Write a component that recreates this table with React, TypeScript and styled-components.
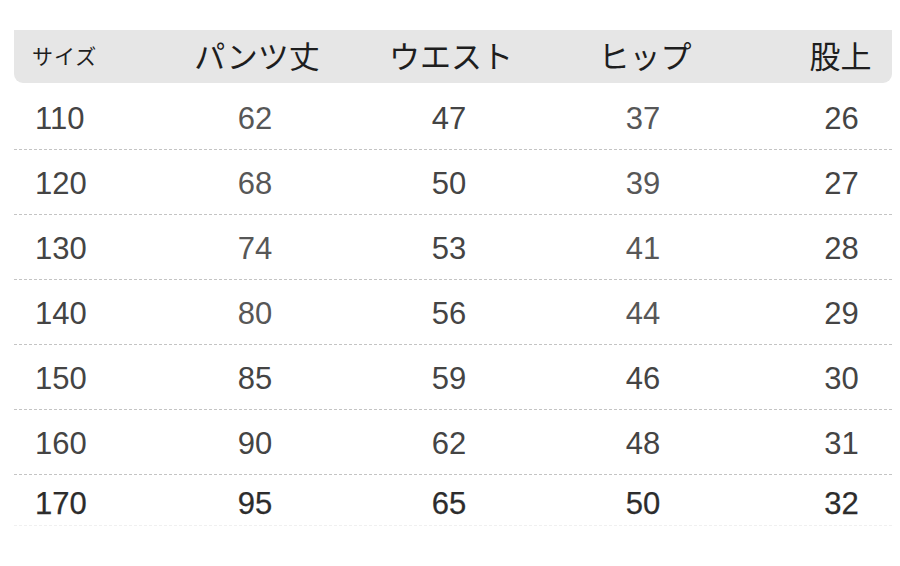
import React from "react";
import styled, { createGlobalStyle } from "styled-components";

const Global = createGlobalStyle`
  html, body { margin: 0; padding: 0; background: #ffffff; }
  body { width: 900px; height: 566px; overflow: hidden; }
`;

const Page = styled.div`
  padding: 30px 8px 0 14px;
  font-family: "Liberation Sans", Arial, "Noto Sans CJK JP", sans-serif;
`;

const Table = styled.div`
  width: 878px;
  display: flex;
  flex-direction: column;
`;

const cols = "147px 194px 194px 194px 1fr";

const HeaderRow = styled.div`
  display: grid;
  grid-template-columns: ${cols};
  align-items: center;
  height: 53px;
  background: #e6e6e6;
  border-radius: 0 0 9px 9px;
  margin-bottom: 2px;
`;

const HeadCell = styled.div<{ $first?: boolean; $last?: boolean }>`
  font-family: "Noto Sans CJK JP", "Liberation Sans", sans-serif;
  color: #1e1e1e;
  font-size: ${(p) => (p.$first ? "21px" : "31px")};
  line-height: 1;
  text-align: ${(p) => (p.$first ? "left" : "center")};
  padding-left: ${(p) => (p.$first ? "18px" : p.$last ? "46px" : "0")};
  padding-right: ${(p) => (p.$first || p.$last ? "0" : "2px")};
  margin-top: ${(p) => (p.$first ? "-2px" : "-4px")};
  letter-spacing: ${(p) => (p.$first ? "1px" : "0")};
  white-space: nowrap;
`;

const Row = styled.div<{ $last?: boolean }>`
  display: grid;
  grid-template-columns: ${cols};
  align-items: center;
  height: ${(p) => (p.$last ? "44px" : "62px")};
  padding-top: ${(p) => (p.$last ? "6px" : "2px")};
  border-bottom: 1px dashed ${(p) => (p.$last ? "#f0f0f0" : "#c4c4c4")};
  color: ${(p) => (p.$last ? "#2c2c2c" : "#444444")};
  -webkit-text-stroke: ${(p) => (p.$last ? "0.25px #2c2c2c" : "0")};
`;

const Cell = styled.div<{ $first?: boolean; $last?: boolean; $light?: boolean }>`
  font-size: 31px;
  line-height: 1;
  text-align: ${(p) => (p.$first ? "left" : "center")};
  padding-left: ${(p) => (p.$first ? "21px" : p.$last ? "48px" : "0")};
  padding-right: ${(p) => (p.$first || p.$last ? "0" : "6px")};
  color: ${(p) => (p.$light ? "#575757" : "inherit")};
`;

const headers = ["サイズ", "パンツ丈", "ウエスト", "ヒップ", "股上"];

const rows: string[][] = [
  ["110", "62", "47", "37", "26"],
  ["120", "68", "50", "39", "27"],
  ["130", "74", "53", "41", "28"],
  ["140", "80", "56", "44", "29"],
  ["150", "85", "59", "46", "30"],
  ["160", "90", "62", "48", "31"],
  ["170", "95", "65", "50", "32"],
];

export default function App() {
  return (
    <>
      <Global />
      <Page>
        <Table>
          <HeaderRow>
            {headers.map((h, i) => (
              <HeadCell key={h} $first={i === 0} $last={i === headers.length - 1}>
                {h}
              </HeadCell>
            ))}
          </HeaderRow>
          {rows.map((r, ri) => {
            const last = ri === rows.length - 1;
            return (
              <Row key={r[0]} $last={last}>
                {r.map((v, ci) => (
                  <Cell
                    key={ci}
                    $first={ci === 0}
                    $last={ci === r.length - 1}
                    $light={!last && (ci === 1 || ci === 3) && ri < 4}
                  >
                    {v}
                  </Cell>
                ))}
              </Row>
            );
          })}
        </Table>
      </Page>
    </>
  );
}
